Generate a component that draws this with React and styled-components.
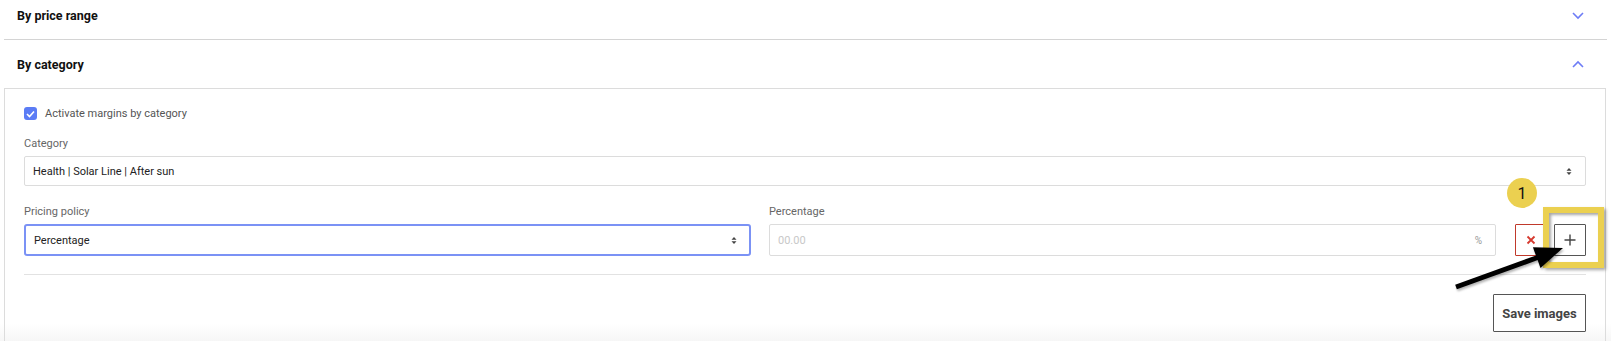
import React from "react";
import styled, { createGlobalStyle } from "styled-components";

const Global = createGlobalStyle`
  html, body { margin: 0; padding: 0; background: #fff; }
  body { font-family: Roboto, "Liberation Sans", Arial, sans-serif; overflow: hidden; }
  * { box-sizing: border-box; }
`;

const Page = styled.div`
  position: relative;
  width: 1611px;
  height: 341px;
  overflow: hidden;
  padding: 0 4px;
  background: linear-gradient(to bottom, #fff 0, #fff 324px, #f6f6f6 341px);
`;

const Accordion = styled.div`
  margin-top: -8px;
`;

const Header = styled.div`
  display: flex;
  align-items: center;
  justify-content: space-between;
  height: 48px;
  padding: 0 23px 0 13px;
  border-bottom: ${(p) => (p.$open ? "none" : "1px solid #d4d4d4")};
`;

const HeaderTitle = styled.span`
  font-size: 12.5px;
  font-weight: 700;
  color: #111;
`;

const Chevron = ({ up }) => (
  <svg width="12" height="8" viewBox="0 0 12 8">
    <path
      d={up ? "M1 7 L6 2 L11 7" : "M1 1 L6 6 L11 1"}
      fill="none"
      stroke="#6d7cf6"
      strokeWidth="1.6"
    />
  </svg>
);

const Panel = styled.div`
  border: 1px solid #dcdcdc;
  border-bottom: none;
  margin-right: 1px;
  padding: 18px 19px 0 19px;
  height: 260px;
`;

const CheckRow = styled.label`
  display: flex;
  align-items: center;
  gap: 8px;
  height: 13px;
  font-size: 11px;
  color: #555;
`;

const CheckBox = styled.span`
  width: 13px;
  height: 13px;
  border-radius: 3px;
  background: #5b7cf5;
  display: inline-flex;
  align-items: center;
  justify-content: center;
`;

const Field = styled.div`
  display: flex;
  flex-direction: column;
  gap: 5px;
  flex: ${(p) => (p.$grow ? 1 : "none")};
  margin-top: ${(p) => p.$mt || 0}px;
`;

const Label = styled.span`
  font-size: 11px;
  line-height: 14px;
  color: #666;
`;

const SelectBox = styled.div`
  display: flex;
  align-items: center;
  justify-content: space-between;
  height: ${(p) => p.$h}px;
  padding: 0 ${(p) => (p.$focus ? 12 : 13)}px 0 ${(p) => (p.$focus ? 8 : 8)}px;
  border: ${(p) => (p.$focus ? "2px solid #7b92f5" : "1px solid #dcdcdc")};
  border-radius: ${(p) => (p.$focus ? 3 : 2)}px;
  font-size: 11px;
  color: ${(p) => (p.$placeholder ? "#c8c8c8" : "#222")};
  background: #fff;
`;

const Suffix = styled.span`
  font-size: 10px;
  color: #999;
`;

const Caret = () => (
  <svg width="6" height="9" viewBox="0 0 6 9">
    <path d="M0.5 3.8 L3 1 L5.5 3.8 Z M0.5 5.2 L3 8 L5.5 5.2 Z" fill="#444" />
  </svg>
);

const Row = styled.div`
  display: flex;
  align-items: flex-end;
  gap: 18px;
  margin-top: 19px;
`;

const ButtonGroup = styled.div`
  display: flex;
  gap: 7px;
  margin-left: 1px;
`;

const IconButton = styled.button`
  width: 32px;
  height: 32px;
  padding: 0;
  display: flex;
  align-items: center;
  justify-content: center;
  background: #fff;
  border: 1px solid ${(p) => (p.$danger ? "#c0392b" : "#555")};
  border-radius: 1px;
`;

const Divider = styled.hr`
  border: none;
  border-top: 1px solid #e2e2e2;
  margin: 18px 0 0 0;
`;

const Footer = styled.div`
  display: flex;
  justify-content: flex-end;
  margin-top: 19px;
`;

const SaveButton = styled.button`
  width: 93px;
  height: 38px;
  background: #fff;
  border: 1px solid #555;
  border-radius: 1px;
  font-family: Roboto, "Liberation Sans", Arial, sans-serif;
  font-size: 13px;
  font-weight: 700;
  color: #444;
`;

const Highlight = styled.div`
  position: absolute;
  left: 1543px;
  top: 207px;
  width: 61px;
  height: 61px;
  border: 6px solid #ebd050;
  box-shadow: 2px 2px 3px rgba(0, 0, 0, 0.35), inset 2px 2px 3px rgba(0, 0, 0, 0.35);
  pointer-events: none;
`;

const Badge = styled.div`
  position: absolute;
  left: 1507px;
  top: 178px;
  width: 30px;
  height: 30px;
  border-radius: 50%;
  background: #ebd050;
  display: flex;
  align-items: center;
  justify-content: center;
  font-size: 16px;
  color: #111;
`;

const ArrowSvg = styled.svg`
  position: absolute;
  left: 1440px;
  top: 230px;
  filter: drop-shadow(1px 2px 1px rgba(0, 0, 0, 0.3));
  pointer-events: none;
`;

export default function App() {
  return (
    <>
      <Global />
      <Page>
        <Accordion>
          <Header>
            <HeaderTitle>By price range</HeaderTitle>
            <Chevron />
          </Header>
          <Header $open>
            <HeaderTitle>By category</HeaderTitle>
            <Chevron up />
          </Header>
          <Panel>
            <CheckRow>
              <CheckBox>
                <svg width="9" height="8" viewBox="0 0 9 8">
                  <path d="M1 4 L3.5 6.5 L8 1.5" fill="none" stroke="#fff" strokeWidth="1.6" />
                </svg>
              </CheckBox>
              Activate margins by category
            </CheckRow>
            <Field $mt={17}>
              <Label>Category</Label>
              <SelectBox $h={30}>
                <span>Health | Solar Line | After sun</span>
                <Caret />
              </SelectBox>
            </Field>
            <Row>
              <Field $grow>
                <Label>Pricing policy</Label>
                <SelectBox $h={32} $focus>
                  <span>Percentage</span>
                  <Caret />
                </SelectBox>
              </Field>
              <Field $grow>
                <Label>Percentage</Label>
                <SelectBox $h={32} $placeholder>
                  <span>00.00</span>
                  <Suffix>%</Suffix>
                </SelectBox>
              </Field>
              <ButtonGroup>
                <IconButton $danger aria-label="remove">
                  <svg width="10" height="10" viewBox="0 0 10 10">
                    <path d="M1.5 1.5 L8.5 8.5 M8.5 1.5 L1.5 8.5" stroke="#d63a2f" strokeWidth="1.8" />
                  </svg>
                </IconButton>
                <IconButton aria-label="add">
                  <svg width="12" height="12" viewBox="0 0 12 12">
                    <path d="M6 0.5 V11.5 M0.5 6 H11.5" stroke="#444" strokeWidth="1.4" />
                  </svg>
                </IconButton>
              </ButtonGroup>
            </Row>
            <Divider />
            <Footer>
              <SaveButton>Save images</SaveButton>
            </Footer>
          </Panel>
        </Accordion>
        <Badge>1</Badge>
        <Highlight />
        <ArrowSvg width="140" height="70" viewBox="0 0 140 70">
          <line x1="16" y1="57" x2="99" y2="27" stroke="#000" strokeWidth="5" />
          <polygon points="123,18 100.5,37.9 92.9,17.3" fill="#000" />
        </ArrowSvg>
      </Page>
    </>
  );
}
